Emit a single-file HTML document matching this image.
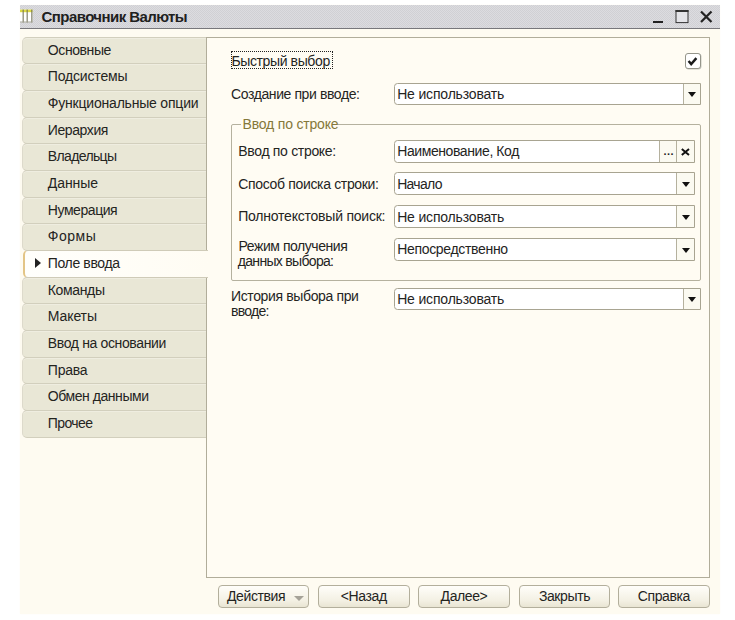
<!DOCTYPE html>
<html lang="ru"><head><meta charset="utf-8"><title>Справочник Валюты</title>
<style>
*{box-sizing:border-box;margin:0;padding:0}
html,body{width:735px;height:620px;overflow:hidden;background:#fff}
body{position:relative;font-family:"Liberation Sans",sans-serif;font-size:14px;color:#24241e}
ul{list-style:none}
#win{position:absolute;left:20px;top:5px;width:699.5px;height:609px;box-shadow:0 0 1.5px #fefbf1;background:#fefbf1}
#title{position:absolute;left:0;top:0;width:699.5px;height:24.3px;background:repeating-conic-gradient(#d0d0d4 0 25%,#dcdce0 0 50%) 0 0/2px 2px;border-bottom:1.5px solid #77777b}
.tx{position:absolute;display:block;white-space:nowrap;line-height:16px;z-index:5;font-weight:normal}
.tab{position:absolute;left:2px;width:184px;background:#e9e7d6;border:1px solid #d2cfbd;border-left-color:#dddacb;border-right:none;border-radius:5px 0 0 5px;box-shadow:inset 0 1px 0 #efede0}
.tab.sel{left:3px;background:linear-gradient(90deg,#fffffc,#fffcf3);border-color:#cfcbb8;border-left:2px solid #e3c585;z-index:3;width:185px;box-shadow:none}
#panel{position:absolute;left:185.8px;top:31.8px;width:504.4px;height:541.6px;background:#fffcf3;border:1px solid #b1ad9a}
.inp{position:absolute;height:22.7px;background:#fff;border:1px solid #a8a491;border-radius:3.5px 0 0 3.5px;overflow:hidden}
.dd,.b2{position:absolute;top:0;width:17.5px;height:20.7px;border-left:1px solid #b5b19e;background:#fbfaf1}
.dd{right:0}
.dd i{position:absolute;left:4.4px;top:8.6px;border:4.5px solid transparent;border-top:5px solid #111;border-bottom:none}
.b2 b{position:absolute;left:0;width:100%;text-align:center;top:3px;font-size:11px;line-height:14px;letter-spacing:0.5px}
.b2 svg{position:absolute;left:0;top:0}
.btn{position:absolute;top:580px;width:91.6px;height:23.4px;border:1px solid #b3af9c;border-radius:4px;background:linear-gradient(#fffefa,#f3f0e3 70%,#e9e5d3);text-align:center;line-height:21px;white-space:nowrap;letter-spacing:-0.4px}
.da{position:absolute;right:4.5px;top:9.5px;border:5px solid transparent;border-top:5px solid #a5a298;border-bottom:none}
#grp{position:absolute;width:470.5px;height:156.8px;border:1px solid #b5b19e;border-radius:2px}
.arr{position:absolute;border:5px solid transparent;border-left:6px solid #222;border-right:none;z-index:6}
.focus{position:absolute;width:102.2px;height:17.8px;border:1px dotted #222;z-index:6}
.chk{position:absolute;width:15.5px;height:15.6px;border:1px solid #95958a;border-radius:3px;background:#fff;box-shadow:0.5px 0.5px 0 #c9c9c0}
.chk svg{position:absolute;left:0;top:0}
.wb{position:absolute;z-index:6}
</style></head><body>
<div id="win">
<div id="title"><svg class="wb" style="left:0;top:4px" width="13" height="14" viewBox="0 0 13 14">
<rect x="0" y="0.6" width="12.5" height="12.8" fill="#fff"/>
<rect x="0" y="0.6" width="12.5" height="2.6" fill="#dcd944"/>
<path d="M3.2 0.6 V13.4 M7.2 0.6 V13.4 M11.8 0.6 V13.4" stroke="#6f6f55" stroke-opacity="0.8" stroke-width="1.3"/>
<path d="M0 13 H12.4" stroke="#9a9a8c" stroke-width="0.9"/>
</svg><h1 class="tx" style="left:21.60px;top:3.90px;font-size:15px;letter-spacing:-0.573px;font-weight:bold;color:#202020;">Справочник Валюты</h1><svg class="wb" style="left:628px;top:1px" width="70" height="22" viewBox="0 0 70 22">
<path d="M5 16 H15" stroke="#222" stroke-width="2"/>
<rect x="28" y="4.6" width="12" height="12" fill="#e4e4e8" stroke="#333" stroke-width="1"/>
<path d="M27.5 5 H40.5" stroke="#333" stroke-width="2"/>
<path d="M53 5.5 L63.5 16 M63.5 5.5 L53 16" stroke="#222" stroke-width="2.2"/>
</svg></div>
<ul id="tabs">
<li class="tab" style="top:31.60px;height:27.68px"><span class="tx" style="left:24.80px;top:4.25px;letter-spacing:-0.405px;">Основные</span></li>
<li class="tab" style="top:58.28px;height:27.68px"><span class="tx" style="left:24.80px;top:4.21px;letter-spacing:-0.163px;">Подсистемы</span></li>
<li class="tab" style="top:84.96px;height:27.68px"><span class="tx" style="left:24.80px;top:4.17px;letter-spacing:-0.200px;">Функциональные опции</span></li>
<li class="tab" style="top:111.64px;height:27.68px"><span class="tx" style="left:24.80px;top:4.13px;letter-spacing:-0.408px;">Иерархия</span></li>
<li class="tab" style="top:138.32px;height:27.68px"><span class="tx" style="left:24.80px;top:4.09px;letter-spacing:-0.641px;">Владельцы</span></li>
<li class="tab" style="top:165.00px;height:27.68px"><span class="tx" style="left:24.80px;top:4.05px;letter-spacing:-0.079px;">Данные</span></li>
<li class="tab" style="top:191.68px;height:27.68px"><span class="tx" style="left:24.80px;top:4.01px;letter-spacing:-0.432px;">Нумерация</span></li>
<li class="tab" style="top:218.36px;height:27.68px"><span class="tx" style="left:24.80px;top:3.97px;letter-spacing:0.498px;">Формы</span></li>
<li class="tab sel" style="top:245.04px;height:27.68px"><i class="arr" style="left:9.6px;top:6.96px"></i><span class="tx" style="left:22.80px;top:3.93px;letter-spacing:-0.372px;">Поле ввода</span></li>
<li class="tab" style="top:271.72px;height:27.68px"><span class="tx" style="left:24.80px;top:3.89px;letter-spacing:-0.355px;">Команды</span></li>
<li class="tab" style="top:298.40px;height:27.68px"><span class="tx" style="left:24.80px;top:3.85px;letter-spacing:-0.097px;">Макеты</span></li>
<li class="tab" style="top:325.08px;height:27.68px"><span class="tx" style="left:24.80px;top:3.81px;letter-spacing:-0.363px;">Ввод на основании</span></li>
<li class="tab" style="top:351.76px;height:27.68px"><span class="tx" style="left:24.80px;top:3.77px;letter-spacing:-0.226px;">Права</span></li>
<li class="tab" style="top:378.44px;height:27.68px"><span class="tx" style="left:24.80px;top:3.73px;letter-spacing:-0.447px;">Обмен данными</span></li>
<li class="tab" style="top:405.12px;height:27.68px"><span class="tx" style="left:24.80px;top:3.69px;letter-spacing:-0.601px;">Прочее</span></li>
</ul>
<div id="panel">
<div class="focus" style="left:24.0px;top:13.4px"></div>
<label class="tx" style="left:24.60px;top:15.05px;letter-spacing:-0.376px;">Быстрый выбор</label>
<div class="chk" style="left:478.4px;top:15.6px"><svg width="14" height="13" viewBox="0 0 14 13"><path d="M2.6 6.9 L5.2 10.1 L10.4 4.1" fill="none" stroke="#1a1a1a" stroke-width="2.4"/></svg></div>
<label class="tx" style="left:24.20px;top:48.65px;letter-spacing:-0.398px;">Создание при вводе:</label>
<div class="inp" style="left:186.9px;top:44.8px;width:307.8px"><span class="tx" style="left:2.50px;top:2.85px;letter-spacing:-0.175px;">Не использовать</span><div class="dd"><i></i></div></div>
<div id="grp" style="left:24.2px;top:86.2px">
<span class="tx legend" style="left:9.00px;top:-9.35px;letter-spacing:-0.182px;color:#85783a;padding-left:1.5px;background:#fffcf3;">Ввод по строке</span>
<label class="tx" style="left:6.30px;top:18.45px;letter-spacing:-0.319px;">Ввод по строке:</label>
<div class="inp" style="left:161.7px;top:15.1px;width:301.3px"><span class="tx" style="left:2.50px;top:2.05px;letter-spacing:-0.403px;">Наименование, Код</span><div class="b2" style="right:17px"><b>...</b></div><div class="b2" style="right:0"><svg width="17" height="20" viewBox="0 0 17 20"><path d="M4.8 8.1 L12 14 M12 8.1 L4.8 14" stroke="#111" stroke-width="2" fill="none"/></svg></div></div>
<label class="tx" style="left:6.30px;top:50.75px;letter-spacing:-0.338px;">Способ поиска строки:</label>
<div class="inp" style="left:161.7px;top:47.4px;width:301.3px"><span class="tx" style="left:2.50px;top:2.45px;letter-spacing:-0.696px;">Начало</span><div class="dd"><i></i></div></div>
<label class="tx" style="left:6.30px;top:83.45px;letter-spacing:-0.225px;">Полнотекстовый поиск:</label>
<div class="inp" style="left:161.7px;top:80.2px;width:301.3px"><span class="tx" style="left:2.50px;top:2.75px;letter-spacing:-0.175px;">Не использовать</span><div class="dd"><i></i></div></div>
<label class="tx" style="left:6.60px;top:113.05px;letter-spacing:-0.450px;">Режим получения</label>
<label class="tx" style="left:5.80px;top:128.35px;letter-spacing:-0.688px;">данных выбора:</label>
<div class="inp" style="left:161.7px;top:113.0px;width:301.3px"><span class="tx" style="left:2.50px;top:2.15px;letter-spacing:-0.317px;">Непосредственно</span><div class="dd"><i></i></div></div>
</div>
<label class="tx" style="left:24.20px;top:249.75px;letter-spacing:-0.367px;">История выбора при</label>
<label class="tx" style="left:24.20px;top:265.25px;letter-spacing:-0.729px;">вводе:</label>
<div class="inp" style="left:186.9px;top:250.0px;width:307.8px"><span class="tx" style="left:2.50px;top:1.85px;letter-spacing:-0.175px;">Не использовать</span><div class="dd"><i></i></div></div>
</div>
<div id="btns">
<div class="btn" style="left:197.8px"><span style="margin-right:15px">Действия</span><i class="da"></i></div>
<div class="btn" style="left:298.0px"><span>&lt;Назад</span></div>
<div class="btn" style="left:398.2px"><span>Далее&gt;</span></div>
<div class="btn" style="left:498.7px"><span>Закрыть</span></div>
<div class="btn" style="left:598.0px"><span>Справка</span></div>
</div>
</div>
</body></html>
